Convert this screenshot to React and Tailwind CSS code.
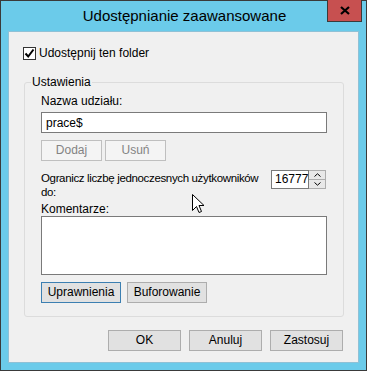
import React from 'react';

const font = { fontFamily: '"Segoe UI", "Liberation Sans", Arial, sans-serif' };

function Btn({ children, w = 'w-[73px]', disabled, focused }) {
    return (
        <button
            type="button"
            disabled={disabled}
            className={`${w} h-[21px] border text-[12px] leading-none ${
                disabled
                    ? 'bg-[#f4f4f4] border-[#bfbfbf] text-[#838383]'
                    : focused
                    ? 'bg-[#e1e1e1] border-[#3c7fb1] text-black'
                    : 'bg-[#e1e1e1] border-[#adadad] text-black'
            }`}
        >
            {children}
        </button>
    );
}

function Cursor() {
    return (
        <svg className="absolute left-[191px] top-[193px]" width="13" height="20" viewBox="0 0 13 20">
            <path d="M0.5 0.5 L0.5 16.5 L4.5 12.5 L7 18.5 L9.5 17.5 L7 11.5 L12 11.5 Z" fill="#fff" stroke="#000" strokeWidth="1" />
        </svg>
    );
}

export default function App() {
    return (
        <div style={font} className="relative w-[367px] h-[371px] bg-[#6bcbea] border border-[#3a3a3a] flex flex-col px-[7px] pb-[7px] text-black">
            {/* Barre de titre */}
            <div className="relative h-[30px] shrink-0 flex items-center justify-center">
                <span className="text-[15px] leading-none -mt-[2px] ml-[2px]">Udostępnianie zaawansowane</span>
                <div className="absolute right-[-3px] top-[-1px] w-[35px] h-[22px] bg-[#c75050] border border-t-0 border-[#3a3a3a] flex items-center justify-center">
                    <svg width="10" height="9" viewBox="0 0 10 9">
                        <path d="M1 1 L9 8 M9 1 L1 8" stroke="#000" strokeWidth="2.2" />
                    </svg>
                </div>
            </div>

            {/* Zone client */}
            <div className="flex-1 bg-[#f0f0f0] border border-[#8fc1d6] pl-[14px] pr-[14px] pt-[15px] flex flex-col">
                <label className="flex items-center gap-[3px] h-[13px] text-[12px]">
                    <span className="w-[13px] h-[13px] border border-[#333] bg-white flex items-center justify-center">
                        <svg width="11" height="11" viewBox="0 0 11 11">
                            <path d="M1.5 5.5 L4.2 8.5 L9.5 1.5" stroke="#000" strokeWidth="2" fill="none" />
                        </svg>
                    </span>
                    <span className="leading-[15px]">Udostępnij ten folder</span>
                </label>

                <fieldset className="mt-[15px] ml-px border border-[#dcdcdc] rounded-[3px] pb-[13px]">
                    <legend className="ml-[6px] px-[1px] text-[12px] leading-[15px]">Ustawienia</legend>

                    <div className="px-[16px]">
                        <div className="mt-[4px] text-[12px] leading-[15px]">Nazwa udziału:</div>
                        <input
                            defaultValue="prace$"
                            className="mt-[3px] w-full h-[21px] border border-[#7a7a7a] bg-white px-[4px] text-[12px] outline-none"
                        />

                        <div className="mt-[6px] flex gap-[3px]">
                            <Btn w="w-[61px]" disabled>Dodaj</Btn>
                            <Btn w="w-[61px]" disabled>Usuń</Btn>
                        </div>

                        <div className="mt-[9px] flex items-start justify-between">
                            <div className="mt-px text-[11.5px] leading-[14px] whitespace-nowrap tracking-[-0.35px]">
                                Ogranicz liczbę jednoczesnych użytkowników
                                <br />
                                do:
                            </div>
                            <div className="flex h-[19px] mr-[1px]">
                                <div className="w-[38px] h-[19px] border border-[#7a7a7a] bg-white text-[12px] leading-[17px] pl-[3px] whitespace-nowrap">
                                    16777
                                </div>
                                <div className="w-[17px] h-[19px] flex flex-col">
                                    <div className="h-[10px] border border-l-0 border-[#adadad] bg-[#e8e8e8] flex items-center justify-center">
                                        <svg width="7" height="4" viewBox="0 0 7 4"><path d="M0.5 3.5 L3.5 0.8 L6.5 3.5" stroke="#000" fill="none" /></svg>
                                    </div>
                                    <div className="h-[9px] border border-l-0 border-t-0 border-[#adadad] bg-[#e8e8e8] flex items-center justify-center">
                                        <svg width="7" height="4" viewBox="0 0 7 4"><path d="M0.5 0.5 L3.5 3.2 L6.5 0.5" stroke="#000" fill="none" /></svg>
                                    </div>
                                </div>
                            </div>
                        </div>

                        <div className="mt-[4px] text-[12px] leading-[13px]">Komentarze:</div>
                        <textarea className="block w-full h-[59px] border border-[#7a7a7a] bg-white resize-none outline-none" />

                        <div className="mt-[7px] flex gap-[6px]">
                            <Btn w="w-[80px]" focused>Uprawnienia</Btn>
                            <Btn w="w-[80px]">Buforowanie</Btn>
                        </div>
                    </div>
                </fieldset>

                <div className="mt-[13px] flex justify-end gap-[8px] pr-[1px]">
                    <Btn>OK</Btn>
                    <Btn>Anuluj</Btn>
                    <Btn>Zastosuj</Btn>
                </div>
            </div>

            <Cursor />
        </div>
    );
}
